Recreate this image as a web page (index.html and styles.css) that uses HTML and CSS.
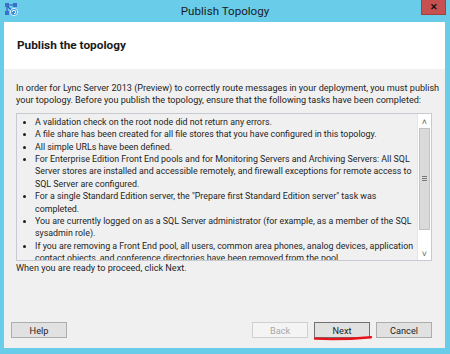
FILE: index.html
```html
<!DOCTYPE html>
<html lang="en">
<head>
    <meta charset="UTF-8">
    <title>Publish Topology</title>
    <link rel="stylesheet" href="styles.css">
</head>
<body>
    <div class="frame">
        <div class="titlebar">
            <svg class="appicon" width="13" height="13" viewBox="0 0 13 13">
                <rect x="0" y="0" width="4" height="4" fill="#3b6fc9"/>
                <rect x="8" y="0" width="4" height="4" fill="#3b6fc9"/>
                <rect x="0" y="8" width="4" height="4" fill="#3b6fc9"/>
                <path d="M2 4 L2 8 M4 2 L8 2 M3 4 L9 9" stroke="#2a5bb8" stroke-width="1.2"/>
                <circle cx="9" cy="9" r="3.6" fill="#2f8ee0" stroke="#fff" stroke-width="0.8"/>
                <path d="M7.2 9 A1.8 1.8 0 1 1 9 10.8" stroke="#fff" stroke-width="1" fill="none"/>
            </svg>
            <span class="title">Publish Topology</span>
            <button class="close">&#x2715;</button>
        </div>
        <div class="dialog">
            <div class="header">Publish the topology</div>
            <div class="content">
                <p class="intro">In order for Lync Server 2013 (Preview) to correctly route messages in your deployment, you must publish<br>your topology. Before you publish the topology, ensure that the following tasks have been completed:</p>
                <div class="listbox">
                    <ul class="tasks">
                        <li>A validation check on the root node did not return any errors.</li>
                        <li>A file share has been created for all file stores that you have configured in this topology.</li>
                        <li>All simple URLs have been defined.</li>
                        <li>For Enterprise Edition Front End pools and for Monitoring Servers and Archiving Servers: All SQL<br>Server stores are installed and accessible remotely, and firewall exceptions for remote access to<br>SQL Server are configured.</li>
                        <li>For a single Standard Edition server, the "Prepare first Standard Edition server" task was<br>completed.</li>
                        <li>You are currently logged on as a SQL Server administrator (for example, as a member of the SQL<br>sysadmin role).</li>
                        <li>If you are removing a Front End pool, all users, common area phones, analog devices, application<br>contact objects, and conference directories have been removed from the pool.</li>
                    </ul>
                    <div class="scrollbar">
                        <div class="arrow">&#x2C4;</div>
                        <div class="thumb"><span class="grip"></span></div>
                        <div class="track"></div>
                        <div class="arrow">&#x2C5;</div>
                    </div>
                </div>
                <p class="hint">When you are ready to proceed, click Next.</p>
                <div class="buttons">
                    <button class="btn">Help</button>
                    <span class="spacer"></span>
                    <button class="btn" disabled>Back</button>
                    <span class="next-wrap">
                        <button class="btn default">Next</button>
                        <svg class="mark" width="60" height="6" viewBox="0 0 60 6">
                            <path d="M1 3.6 C 15 4.4, 35 4.2, 57 2.2" stroke="#e8141b" stroke-width="2.4" fill="none" stroke-linecap="round"/>
                        </svg>
                    </span>
                    <button class="btn">Cancel</button>
                </div>
            </div>
        </div>
    </div>
</body>
</html>
```

FILE: styles.css
```css
body{
    margin: 0;
    background-color: #69cdea;
    font-family: Roboto, "Liberation Sans", sans-serif;
}
.frame{
    width: 450px;
    height: 354px;
    display: flex;
    flex-direction: column;
}
.titlebar{
    height: 22px;
    display: flex;
    align-items: center;
    position: relative;
}
.appicon{
    margin-left: 5px;
    margin-top: -3px;
}
.title{
    position: absolute;
    left: 0;
    right: 0;
    top: 4px;
    text-align: center;
    font-size: 11.6px;
    color: #1b1b1b;
    pointer-events: none;
}
.close{
    margin-left: auto;
    margin-right: 4px;
    align-self: flex-start;
    width: 25px;
    height: 15px;
    padding: 0;
    border: 1px solid #a34141;
    border-top: none;
    background-color: #c75050;
    color: #111;
    font-size: 9px;
    font-weight: bold;
    line-height: 13px;
}
.dialog{
    margin: 0 5px 6px 4px;
    flex: 1;
    display: flex;
    flex-direction: column;
    background-color: #f0f0f0;
}
.header{
    height: 47px;
    background-color: #fff;
    box-sizing: border-box;
    padding: 16px 0 0 13px;
    font-size: 11.8px;
    font-weight: bold;
    color: #1a1a1a;
}
.content{
    flex: 1;
    display: flex;
    flex-direction: column;
    padding: 13px 13px 10px 12px;
    font-size: 9.1px;
    line-height: 12.4px;
    color: #1e1e1e;
}
.intro{
    margin: 0;
    white-space: nowrap;
}
.listbox{
    margin-top: 6px;
    height: 148px;
    box-sizing: border-box;
    border: 1px solid #c7cbd1;
    display: flex;
    overflow: hidden;
}
.tasks{
    flex: 1;
    margin: 0;
    padding: 2px 0 0 18px;
    font-size: 8.85px;
    white-space: nowrap;
    overflow: hidden;
}
.tasks li::marker{
    font-size: 9px;
}
.scrollbar{
    width: 13px;
    display: flex;
    flex-direction: column;
    background-color: #fff;
    border-left: 1px solid #e6e6e6;
}
.arrow{
    height: 14px;
    text-align: center;
    font-size: 9px;
    line-height: 16px;
    color: #606060;
}
.thumb{
    height: 102px;
    margin: 0 1px;
    box-sizing: border-box;
    background-color: #dadada;
    border: 1px solid #c2c2c2;
    display: flex;
    align-items: center;
    justify-content: center;
}
.grip{
    width: 5px;
    height: 5px;
    border-top: 1px solid #777;
    border-bottom: 1px solid #777;
    box-sizing: border-box;
    background: linear-gradient(#777, #777) center / 100% 1px no-repeat;
}
.track{
    flex: 1;
}
.hint{
    margin: 1px 0 0 0;
}
.buttons{
    margin-top: auto;
    display: flex;
    gap: 6px;
    margin-left: -5px;
}
.spacer{
    flex: 1;
}
.btn{
    width: 56px;
    height: 16px;
    padding: 0;
    box-sizing: border-box;
    border: 1px solid #adadad;
    background-color: #e1e1e1;
    font-family: inherit;
    font-size: 9.2px;
    line-height: 13px;
    color: #1e1e1e;
}
.btn:disabled{
    background-color: #f4f4f4;
    border-color: #d0d0d0;
    color: #a8a8a8;
}
.btn.default{
    border-color: #707070;
}
.next-wrap{
    position: relative;
    display: flex;
}
.mark{
    position: absolute;
    left: 0;
    top: 13px;
}
```
